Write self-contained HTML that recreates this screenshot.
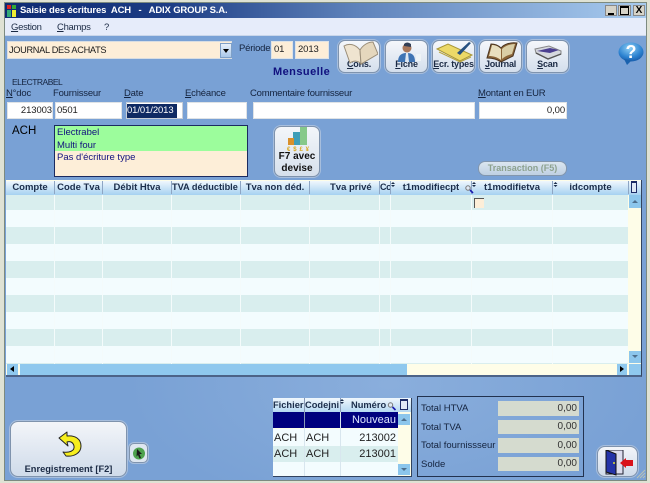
<!DOCTYPE html>
<html><head><meta charset="utf-8">
<style>
html,body{margin:0;padding:0}
body{width:650px;height:483px;overflow:hidden;position:relative;background:#dfe2d4;font-family:"Liberation Sans",sans-serif;font-size:10px;color:#1a2a44}
.a{position:absolute;box-sizing:border-box;white-space:nowrap}
.in{position:absolute;box-sizing:border-box;background:#fff;border:1px solid #dfe3e6;font-size:9.500px;line-height:14px;padding:0 2px;color:#222;white-space:nowrap;letter-spacing:-.1px}
.lb{position:absolute;white-space:nowrap;font-size:9.500px;color:#14233e;letter-spacing:-.2px;line-height:12px}
.tb{position:absolute;box-sizing:border-box;top:40px;height:33px;border:1px solid #7f93ad;border-radius:7px;background:linear-gradient(#f5f7fb,#d3deec);box-shadow:0 0 0 1px #a7bedd}
.tb span{position:absolute;left:-2px;right:-2px;bottom:2px;text-align:center;font-weight:bold;font-size:9px;color:#1b2a44;line-height:11px;white-space:nowrap;letter-spacing:-.2px}
.th{position:absolute;top:0;height:13px;box-sizing:border-box;text-align:center;font-weight:bold;font-size:9.500px;line-height:13px;color:#1b2d4a;border-right:1px solid #8ea6c4;overflow:hidden;white-space:nowrap}
.sa{position:absolute;width:5px;height:6px}
.m{position:absolute}
u{text-decoration:underline}
</style></head><body>

<!-- window -->
<div class="a" style="left:4px;top:2px;width:643px;height:479px;border:1px solid #7c8a80"></div>
<div class="a" style="left:5px;top:3px;width:641px;height:477px;background:radial-gradient(ellipse 260px 130px at 60% 80%,#8aaedc 0%,rgba(122,162,213,0) 100%),#79a1d5"></div>

<!-- title -->
<div class="a" style="left:5px;top:3px;width:641px;height:15px;background:linear-gradient(90deg,#0e2b72 0%,#1c3c84 25%,#5f83bb 55%,#a8cbef 100%)"></div>
<svg class="a" style="left:7px;top:5px" width="9" height="12"><rect width="4" height="4" fill="#d22"/><rect x="5" width="4" height="4" fill="#3a3"/><rect y="5" width="4" height="7" fill="#3a7"/><rect x="5" y="5" width="4" height="7" fill="#ee3"/></svg>
<div class="a" style="left:20px;top:4px;font-weight:bold;font-size:9.500px;line-height:14px;color:#fff;letter-spacing:-.15px;white-space:pre">Saisie des écritures  ACH   -   ADIX GROUP S.A.</div>
<div class="a" style="left:605px;top:5px;width:12px;height:11px;background:#d6d3c8;border:1px solid #888"><div class="a" style="left:2px;top:7px;width:6px;height:2px;background:#000"></div></div>
<div class="a" style="left:618px;top:5px;width:13px;height:11px;background:#d6d3c8;border:1px solid #888"><div class="a" style="left:1px;top:0;width:9px;height:9px;border:1px solid #000;border-top-width:2px"></div></div>
<div class="a" style="left:633px;top:5px;width:12px;height:11px;background:#d6d3c8;border:1px solid #888;font-weight:bold;font-size:10px;line-height:9px;text-align:center;color:#000">X</div>

<!-- menu -->
<div class="a" style="left:5px;top:18px;width:641px;height:18px;background:#e6ecfa;border-bottom:1px solid #c9d6ea"></div>
<div class="a" style="left:11px;top:22px;font-size:9.500px;line-height:12px;color:#1b2a44;letter-spacing:-.3px"><u>G</u>estion</div>
<div class="a" style="left:57px;top:22px;font-size:9.500px;line-height:12px;color:#1b2a44;letter-spacing:-.3px"><u>C</u>hamps</div>
<div class="a" style="left:104px;top:22px;font-size:9.500px;line-height:12px;color:#1b2a44">?</div>

<!-- journal combo -->
<div class="a" style="left:7px;top:41px;width:225px;height:18px;background:#fdeed8;border:1px solid #d8dde2;font-size:9.200px;line-height:16px;padding-left:1px;color:#1a1a1a;letter-spacing:-.3px">JOURNAL DES ACHATS</div>
<div class="a" style="left:220px;top:43px;width:12px;height:15px;background:linear-gradient(#e8f1fb,#a9c7e9);border:1px solid #7fa0c7"><div class="a" style="left:2px;top:5px;border:3px solid transparent;border-top:4px solid #000;border-bottom:0"></div></div>

<div class="lb" style="left:239px;top:43px">Période</div>
<div class="in" style="left:271px;top:41px;width:22px;height:18px;background:#fdeed8;line-height:16px">01</div>
<div class="in" style="left:295px;top:41px;width:34px;height:18px;background:#fdeed8;line-height:16px">2013</div>
<div class="a" style="left:273px;top:66px;font-weight:bold;font-size:11px;line-height:13px;color:#10107e;letter-spacing:.45px">Mensuelle</div>

<!-- toolbar -->
<div class="tb" style="left:338px;width:42px"><span><u>C</u>ons.</span>
<svg class="a" style="left:3px;top:0" width="36" height="24"><path d="M18 9C13 3 7 2 2 5L8 22C12 19 17 20 19 23Z" fill="#efe4d0" stroke="#9a8d78"/><path d="M18 9C21 4 26 1 31 1L36 13L19 23Z" fill="#e5d7bd" stroke="#9a8d78"/></svg></div>
<div class="tb" style="left:385px;width:43px"><span><u>F</u>iche</span>
<svg class="a" style="left:8px;top:0" width="28" height="23"><circle cx="13" cy="7" r="4.500" fill="#a9775a"/><path d="M10 3Q13 0 17 3L17 6L10 5Z" fill="#333f55"/><path d="M4 21C4 13 9 12 13 12C18 12 21 14 21 21Z" fill="#3f74b4"/><path d="M12 12L14 12L15 21L11 21Z" fill="#dfe8f2"/><rect x="22" y="13" width="5" height="7" fill="#eef3f6"/></svg></div>
<div class="tb" style="left:432px;width:43px"><span><u>E</u>cr. types</span>
<svg class="a" style="left:3px;top:0" width="38" height="22"><path d="M1 8L12 3L36 14L24 20Z" fill="#ecd968" stroke="#a89636"/><path d="M3 11L24 21L35 16" fill="none" stroke="#b7a33e"/><path d="M21 12L33 1L35 2L24 14Z" fill="#27507f"/></svg></div>
<div class="tb" style="left:479px;width:43px"><span><u>J</u>ournal</span>
<svg class="a" style="left:6px;top:0" width="32" height="23"><path d="M15 7C11 3 7 3 5 3L1 17C6 17 11 18 15 21L27 15L31 2C25 1 18 3 15 7Z" fill="#8a6438" stroke="#4a3520"/><path d="M15 8C12 5 9 4 6 4L3 15C7 15 11 16 15 19Z" fill="#e8dfbe"/><path d="M16 8C19 5 24 3 29 3L26 13C22 14 18 16 16 18Z" fill="#d9cea6"/></svg></div>
<div class="tb" style="left:526px;width:43px"><span><u>S</u>can</span>
<svg class="a" style="left:7px;top:3px" width="30" height="16"><path d="M1 5L15 2L27 7L27 10L14 15L2 9Z" fill="#d5d8de" stroke="#888"/><path d="M3 7L16 9L25 6L16 4Z" fill="#4b3f90"/><path d="M2 9L14 15L27 10" fill="none" stroke="#555" stroke-width="1.300"/></svg></div>

<!-- help -->
<svg class="a" style="left:618px;top:42px" width="26" height="24"><defs><radialGradient id="h" cx=".45" cy=".3" r=".8"><stop offset="0" stop-color="#8fd0f5"/><stop offset=".6" stop-color="#2c82d0"/><stop offset="1" stop-color="#0f4f9d"/></radialGradient></defs><ellipse cx="13" cy="10" rx="12.500" ry="9.500" fill="url(#h)"/><path d="M6 17L9 23L14 18Z" fill="#1a62ae"/><text x="13" y="16" font-size="18" font-weight="bold" text-anchor="middle" fill="#fff" font-family="Liberation Sans">?</text></svg>

<!-- form -->
<div class="lb" style="left:12px;top:76px;font-size:8.500px;letter-spacing:-.5px">ELECTRABEL</div>
<div class="lb" style="left:6px;top:88px"><u>N</u>°doc</div>
<div class="lb" style="left:53px;top:88px">Fournisseur</div>
<div class="lb" style="left:124px;top:88px"><u>D</u>ate</div>
<div class="lb" style="left:185px;top:88px"><u>E</u>chéance</div>
<div class="lb" style="left:250px;top:88px">Commentaire fournisseur</div>
<div class="lb" style="left:478px;top:88px"><u>M</u>ontant en EUR</div>
<div class="in" style="left:7px;top:102px;width:46px;height:17px;text-align:right;line-height:15px;padding-right:0">213003</div>
<div class="in" style="left:55px;top:102px;width:67px;height:17px;line-height:15px;padding-left:1px">0501</div>
<div class="in" style="left:126px;top:102px;width:57px;height:17px;line-height:15px;border:1px solid #c8ced6;background:#fff;padding:1px 0 0 0"><div style="background:#0f2a63;color:#fff;line-height:14px;height:14px;padding:0;width:50px;overflow:hidden;letter-spacing:-.1px">01/01/2013</div></div>
<div class="in" style="left:187px;top:102px;width:60px;height:17px"></div>
<div class="in" style="left:253px;top:102px;width:222px;height:17px"></div>
<div class="in" style="left:479px;top:102px;width:88px;height:17px;text-align:right;line-height:15px;padding-right:1px">0,00</div>

<div class="a" style="left:12px;top:124px;font-size:11.500px;line-height:14px;color:#000">ACH</div>
<div class="a" style="left:54px;top:125px;width:194px;height:52px;border:1px solid #1a2a60;background:#fdeed8;overflow:hidden">
<div class="a" style="left:0;top:0;width:192px;height:25px;background:#9cfd9c"></div>
<div class="a" style="left:2px;top:1px;font-size:9.500px;line-height:12px;color:#10107e">Electrabel</div>
<div class="a" style="left:2px;top:14px;font-size:9.500px;line-height:12px;color:#10107e">Multi four</div>
<div class="a" style="left:2px;top:26px;font-size:9.500px;line-height:12px;color:#10107e">Pas d'écriture type</div>
</div>

<!-- F7 -->
<div class="a" style="left:274px;top:126px;width:46px;height:51px;border:1px solid #7f93ad;border-radius:7px;background:linear-gradient(#f3f6fa,#d6e0ec);box-shadow:0 0 0 1px #a7bedd;text-align:center">
<svg class="a" style="left:12px;top:0" width="24" height="25"><rect x="13" y="0" width="7" height="18" fill="#86c98a"/><rect x="6" y="5" width="7" height="13" fill="#3e9eb8"/><rect x="1" y="11" width="6" height="7" fill="#d8902c"/><text x="0" y="24" font-size="6" font-weight="bold" fill="#d8a71e" font-family="Liberation Sans" textLength="22">€$£¥</text></svg>
<div class="a" style="left:0;right:0;top:24px;font-weight:bold;font-size:10px;line-height:11.500px;color:#111;white-space:normal">F7 avec<br>devise</div></div>

<!-- Transaction -->
<div class="a" style="left:478px;top:161px;width:89px;height:15px;border:1px solid #8296ae;border-radius:7px;background:linear-gradient(#dbe6f0,#bfd0e2);text-align:center;font-weight:bold;font-size:9px;line-height:13px;color:#8da28f">Transaction (F5)</div>

<!-- main grid -->
<div class="a" style="left:6px;top:180px;width:636px;height:197px;background:#fefde8;border-bottom:2px solid #4c6388;border-right:1px solid #31435f;overflow:hidden">
 <div class="a" style="left:0;top:15px;width:622px;height:169px;background:linear-gradient(#d9eeee 0 17px,#f3fcfe 17px 34px) 0 -2px/100% 34px repeat-y"></div>
 <div class="a" style="left:0;top:1px;width:635px;height:14px;background:linear-gradient(#f0f7fd,#a6d1f1)">
  <div class="th" style="left:0;width:49px">Compte</div>
  <div class="th" style="left:49px;width:48px">Code Tva</div>
  <div class="th" style="left:97px;width:69px">Débit Htva</div>
  <div class="th" style="left:166px;width:69px;font-size:9.200px;text-align:left">TVA déductible</div>
  <div class="th" style="left:235px;width:69px">Tva non déd.</div>
  <div class="th" style="left:304px;width:70px;text-align:left;padding-left:20px">Tva privé</div>
  <div class="th" style="left:374px;width:11px;text-align:left;font-size:9px;letter-spacing:-.4px">Co</div>
  <div class="th" style="left:385px;width:81px">t1modifiecpt</div>
  <div class="th" style="left:466px;width:81px">t1modifietva</div>
  <div class="th" style="left:547px;width:76px">idcompte</div>
  <div class="a" style="left:625px;top:0;width:6px;height:12px;border:1px solid #1c2c66;border-top-width:2px;background:#dfe9f5"></div>
  <svg class="a" style="left:0;top:0" width="635" height="14"><g fill="#1b2d4a"><path id="sa1" d="M387 1l2 2h-4zM387 6l2-2h-4z"/><path d="M468 1l2 2h-4zM468 6l2-2h-4zM549.500 1l2 2h-4zM549.500 6l2-2h-4z"/></g><circle cx="462" cy="7" r="2.200" fill="#dfe9f5" stroke="#777"/><path d="M464 9L467 12" stroke="#1a1ab0" stroke-width="1.600"/></svg>
 </div>
 <svg class="a" style="left:0;top:15px" width="622" height="169"><g stroke="#f4fbfb" stroke-width="1"><path d="M48.500 0V169M96.500 0V169M165.500 0V169M234.500 0V169M303.500 0V169M373.500 0V169M384.500 0V169M465.500 0V169M546.500 0V169"/></g></svg>
 <div class="a" style="left:468px;top:18px;width:10px;height:10px;background:#fdeed8;border-left:1px solid #555;border-top:1px solid #555"></div>
 <!-- v scroll -->
 <div class="a" style="left:623px;top:15px;width:12px;height:13px;background:#8cc6ec"><div class="a" style="left:3px;top:5px;border:3px solid transparent;border-bottom:3px solid #4d6f8d;border-top:0"></div></div>
 <div class="a" style="left:623px;top:171px;width:12px;height:12px;background:#8cc6ec"><div class="a" style="left:3px;top:4px;border:3px solid transparent;border-top:3px solid #4d6f8d;border-bottom:0"></div></div>
 <!-- h scroll -->
 <div class="a" style="left:0;top:184px;width:635px;height:11px;background:#fefde8"></div>
 <div class="a" style="left:14px;top:184px;width:387px;height:11px;background:#8fc8ee"></div>
 <div class="a" style="left:1px;top:184px;width:11px;height:11px;background:#8fc8ee"><div class="a" style="left:3px;top:2px;border:3.500px solid transparent;border-right:4px solid #000;border-left:0"></div></div>
 <div class="a" style="left:611px;top:184px;width:10px;height:11px;background:#8fc8ee"><div class="a" style="left:3px;top:2px;border:3.500px solid transparent;border-left:4px solid #000;border-right:0"></div></div>
 <div class="a" style="left:623px;top:184px;width:12px;height:11px;background:#8fc8ee"></div>
</div>

<!-- small grid -->
<div class="a" style="left:273px;top:398px;width:139px;height:79px;background:#fefde8;border-right:1px solid #31435f;border-bottom:1px solid #31435f;overflow:hidden">
 <div class="a" style="left:0;top:0;width:138px;height:14px;background:linear-gradient(#f0f7fd,#b5d8f2)"></div>
 <div class="a" style="left:0;top:14px;width:125px;height:16px;background:#00007e"></div>
 <div class="a" style="left:0;top:31px;width:125px;height:17px;background:#f3fcfe"></div>
 <div class="a" style="left:0;top:48px;width:125px;height:16px;background:#d9eeee"></div>
 <div class="a" style="left:0;top:64px;width:125px;height:14px;background:#f3fcfe"></div>
 <div class="a" style="left:31px;top:0;width:1px;height:78px;background:#d8e6ee"></div>
 <div class="a" style="left:31px;top:0;width:1px;height:30px;background:#8a9bb6"></div>
 <div class="a" style="left:67px;top:0;width:1px;height:78px;background:#d8e6ee"></div>
 <div class="a" style="left:67px;top:0;width:1px;height:14px;background:#8a9bb6"></div>
 <div class="a" style="left:0;top:0;font-weight:bold;font-size:9.300px;line-height:14px;color:#1b2d4a">Fichier</div>
 <div class="a" style="left:32px;top:0;font-weight:bold;font-size:9.300px;line-height:14px;color:#1b2d4a;width:34px;overflow:hidden">Codejni</div>
 <div class="a" style="left:78px;top:0;font-weight:bold;font-size:9.300px;line-height:14px;color:#1b2d4a">Numéro</div>
 <svg class="a" style="left:0;top:0" width="138" height="14"><path d="M69 1l2 2h-4zM69 6l2-2h-4z" fill="#1b2d4a"/><circle cx="117.500" cy="7" r="2.200" fill="#dfe9f5" stroke="#777"/><path d="M119.500 9L122.500 12" stroke="#1a1ab0" stroke-width="1.600"/></svg>
 <div class="a" style="left:67px;top:14px;width:56px;text-align:right;font-size:11px;line-height:16px;color:#dfe8ff">Nouveau</div>
 <div class="a" style="left:1px;top:33px;font-size:11px;line-height:15px;color:#222">ACH</div>
 <div class="a" style="left:33px;top:33px;font-size:11px;line-height:15px;color:#222">ACH</div>
 <div class="a" style="left:67px;top:33px;width:56px;text-align:right;font-size:11px;line-height:15px;color:#222">213002</div>
 <div class="a" style="left:1px;top:49px;font-size:11px;line-height:15px;color:#222">ACH</div>
 <div class="a" style="left:33px;top:49px;font-size:11px;line-height:15px;color:#222">ACH</div>
 <div class="a" style="left:67px;top:49px;width:56px;text-align:right;font-size:11px;line-height:15px;color:#222">213001</div>
 <div class="a" style="left:125px;top:16px;width:12px;height:11px;background:#8cc6ec"><div class="a" style="left:3px;top:4px;border:3px solid transparent;border-bottom:3px solid #4d6f8d;border-top:0"></div></div>
 <div class="a" style="left:125px;top:66px;width:12px;height:11px;background:#8cc6ec"><div class="a" style="left:3px;top:4px;border:3px solid transparent;border-top:3px solid #4d6f8d;border-bottom:0"></div></div>
 <div class="a" style="left:127px;top:1px;width:8px;height:11px;border:1px solid #1c2c66;border-top-width:2px;background:#dfe9f5"></div>
</div>

<!-- totals -->
<div class="a" style="left:417px;top:396px;width:167px;height:81px;border:1px solid #22324f"></div>
<div class="lb" style="left:421px;top:403px;font-size:9.500px;letter-spacing:0">Total HTVA</div>
<div class="lb" style="left:421px;top:422px;font-size:9.500px;letter-spacing:0">Total TVA</div>
<div class="lb" style="left:421px;top:440px;font-size:9.500px;letter-spacing:0">Total fournissseur</div>
<div class="lb" style="left:421px;top:459px;font-size:9.500px;letter-spacing:0">Solde</div>
<div class="in" style="left:498px;top:401px;width:81px;height:15px;background:#d5dbcf;border:0;text-align:right;font-size:10px;line-height:15px;padding-right:2px;color:#333;letter-spacing:0">0,00</div>
<div class="in" style="left:498px;top:420px;width:81px;height:14px;background:#d5dbcf;border:0;text-align:right;font-size:10px;line-height:14px;padding-right:2px;color:#333;letter-spacing:0">0,00</div>
<div class="in" style="left:498px;top:438px;width:81px;height:15px;background:#d5dbcf;border:0;text-align:right;font-size:10px;line-height:15px;padding-right:2px;color:#333;letter-spacing:0">0,00</div>
<div class="in" style="left:498px;top:457px;width:81px;height:14px;background:#d5dbcf;border:0;text-align:right;font-size:10px;line-height:14px;padding-right:2px;color:#333;letter-spacing:0">0,00</div>

<!-- Enregistrement -->
<div class="a" style="left:10px;top:421px;width:117px;height:56px;border:1px solid #7f93ad;border-radius:8px;background:linear-gradient(#f3f5f9,#cfdbea);box-shadow:0 0 0 1px #a7bedd">
 <svg class="a" style="left:46px;top:9px" width="30" height="28"><path d="M2 7L10 1L10 5C18 4 24 8 24 15C24 22 17 26 9 25L6 21C12 22 18 20 17 15C16 11 13 10 10 11L11 15Z" fill="#f6ee1e" stroke="#222" stroke-linejoin="round"/></svg>
 <div class="a" style="left:0;right:0;top:41px;text-align:center;font-weight:bold;font-size:9.300px;line-height:12px;color:#1b2a44">Enregistrement [F2]</div>
</div>
<div class="a" style="left:129px;top:443px;width:19px;height:20px;border:1px solid #7f93ad;border-radius:5px;background:#dde6f0;box-shadow:0 0 0 1px #a7bedd">
 <svg class="a" style="left:2px;top:2px" width="14" height="15"><circle cx="7" cy="7.500" r="6" fill="#4ea24e"/><path d="M5 3L10 8L7.500 8L9 12L7.500 12.500L6 9L4.500 10.500Z" fill="#1a1a1a"/></svg>
</div>

<!-- exit -->
<div class="a" style="left:597px;top:446px;width:41px;height:31px;border:1px solid #7f93ad;border-radius:8px;background:linear-gradient(#f3f5f9,#cfdbea);box-shadow:0 0 0 1px #a7bedd">
 <svg class="a" style="left:7px;top:3px" width="30" height="26"><rect x="1" y="0" width="17" height="24" fill="#dde" stroke="#223"/><path d="M1 0L11 4L11 25L1 22Z" fill="#2433a8" stroke="#111"/><circle cx="9" cy="13" r="1" fill="#dd3"/><path d="M15 13L21 8L21 10L28 10L28 16L21 16L21 18Z" fill="#d9121a"/></svg>
</div>

<!-- grip -->
<svg class="a" style="left:636px;top:469px" width="10" height="10"><path d="M9 1L1 9M9 4L4 9M9 7L7 9" stroke="#b9c2b5" stroke-width="1"/></svg>

</body></html>
